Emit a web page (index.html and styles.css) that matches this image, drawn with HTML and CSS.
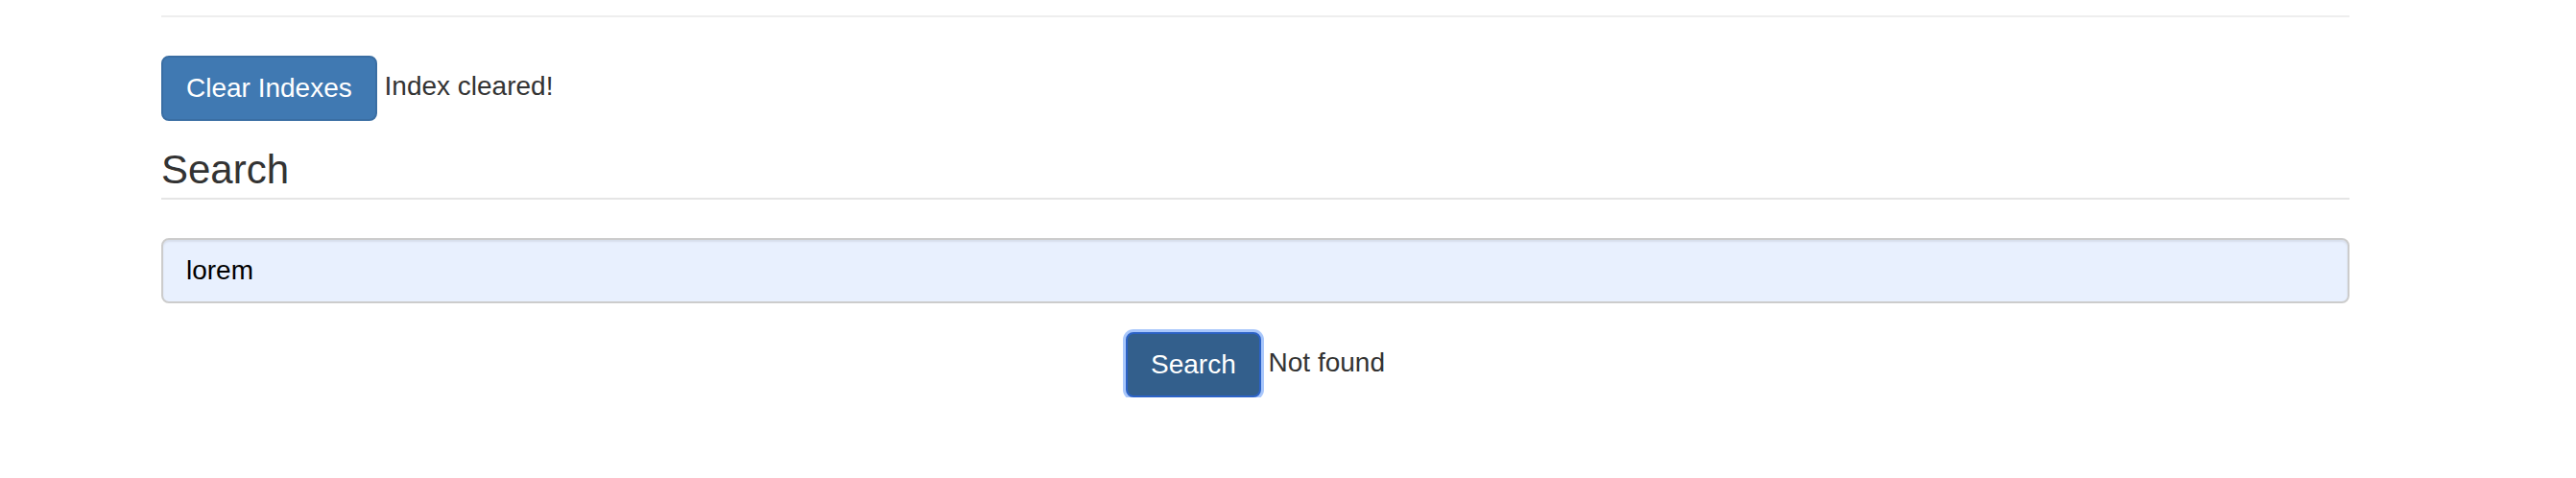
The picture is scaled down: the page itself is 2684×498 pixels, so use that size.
FILE: index.html
```html
<!DOCTYPE html>
<html lang="en">
<head>
<meta charset="utf-8">
<title>Search</title>
<link rel="stylesheet" href="styles.css">
</head>
<body>
<div class="container">
  <hr class="rule">
  <div class="clear-row">
    <button type="button" class="btn btn-primary">Clear Indexes</button>
    <span class="status">Index cleared!</span>
  </div>
  <fieldset class="search-set">
    <legend class="legend">Search</legend>
    <div class="form-group">
      <input type="text" class="form-control" value="lorem">
    </div>
    <div class="search-row">
      <button type="button" class="btn btn-primary btn-focused">Search</button>
      <span class="status">Not found</span>
    </div>
  </fieldset>
</div>
</body>
</html>
```
FILE: styles.css
```css
* {
  box-sizing: border-box;
}

html, body {
  margin: 0;
  padding: 0;
  background: #ffffff;
}

body {
  font-family: "Liberation Sans", Arial, Helvetica, sans-serif;
  font-size: 28px;
  line-height: 40px;
  color: #333333;
}

.container {
  width: 2280px;
  margin-left: 168px;
}

.rule {
  margin: 16px 0 40px;
  border: 0;
  border-top: 2px solid #eeeeee;
  height: 0;
}

.clear-row {
  margin-bottom: 20px;
}

.btn {
  display: inline-block;
  margin: 0;
  padding: 12px 24px;
  font-family: inherit;
  font-size: 28px;
  line-height: 40px;
  font-weight: 400;
  text-align: center;
  vertical-align: middle;
  white-space: nowrap;
  border: 2px solid transparent;
  border-radius: 8px;
  cursor: pointer;
}

.btn-primary {
  color: #ffffff;
  background-color: #4079b2;
  border-color: #3a6ea3;
}

.btn-focused {
  background-color: #335f8c;
  border-color: #2c62c6;
  box-shadow: 0 0 0 3px #a9c7fb;
}

.status {
  color: #333333;
}

.search-set {
  margin: 0;
  padding: 0;
  border: 0;
  min-width: 0;
}

.legend {
  display: block;
  width: 100%;
  padding: 2px 0 0;
  margin: 0 0 40px;
  font-size: 42px;
  line-height: 58px;
  color: #333333;
  border: 0;
  border-bottom: 2px solid #e5e5e5;
}

.form-group {
  margin-bottom: 30px;
}

.form-control {
  display: block;
  width: 100%;
  height: 68px;
  padding: 12px 24px;
  font-family: inherit;
  font-size: 28px;
  line-height: 40px;
  color: #000000;
  background-color: #e8f0fe;
  border: 2px solid #cccccc;
  border-radius: 8px;
  box-shadow: inset 0 2px 2px rgba(0, 0, 0, 0.075);
  outline: none;
}

.search-row {
  text-align: center;
}
```
